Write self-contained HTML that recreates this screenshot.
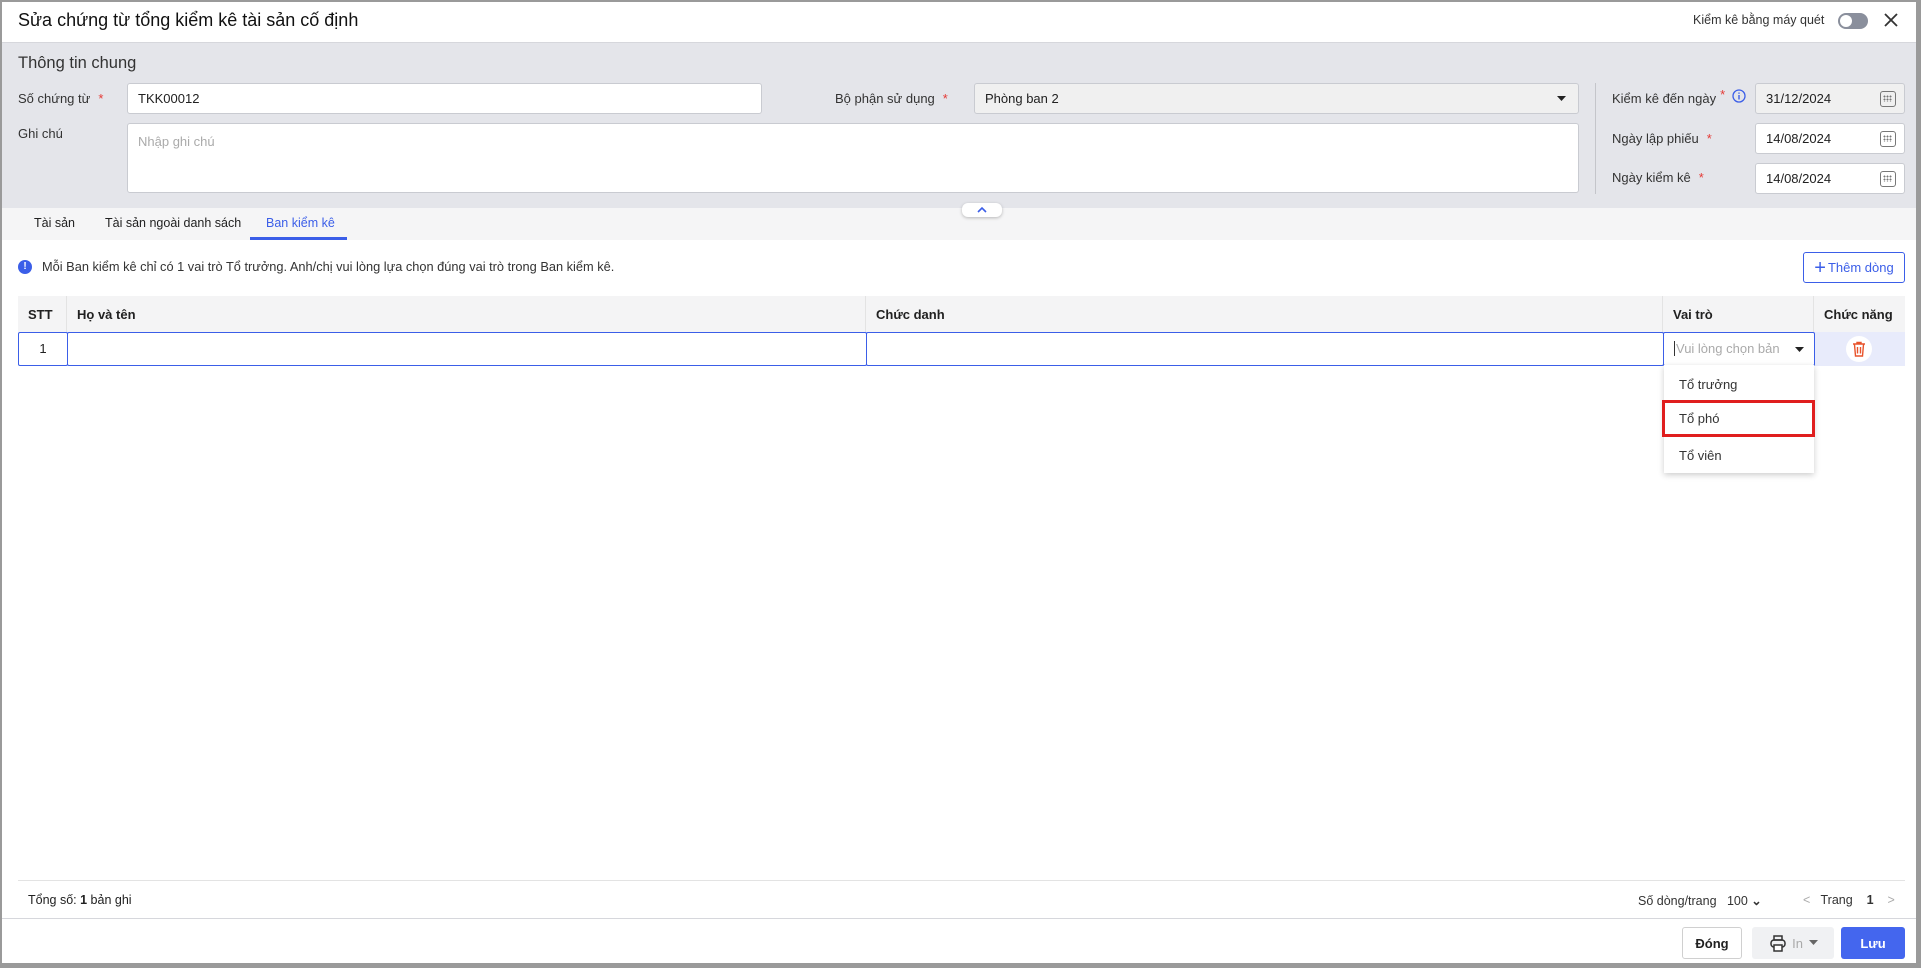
<!DOCTYPE html>
<html><head><meta charset="utf-8"><style>
*{box-sizing:border-box;margin:0;padding:0}
body{width:1921px;height:968px;background:#9a9a9a;font-family:"Liberation Sans",Arial,sans-serif;color:#212121;position:relative;overflow:hidden;font-size:13px}
.a{position:absolute}
#page{left:2px;top:2px;width:1914px;height:961px;background:#fff}
.lbl{font-size:13px;color:#333;white-space:nowrap}
.req{color:#e53935;margin-left:8px}
.inp{background:#fff;border:1px solid #c9cbd1;border-radius:3px;font-size:13px;padding:0 10px;display:flex;align-items:center}
.cal{position:absolute;right:8px;top:7px;width:16px;height:16px;border:1.5px solid #777;border-radius:3px}
.cal:after{content:"";position:absolute;left:2px;top:3px;width:9px;height:7px;background:radial-gradient(circle,#777 0.9px,transparent 1.1px) 0 0/3px 3px}
.th{font-weight:bold;font-size:13px;display:flex;align-items:center;padding-left:10px;border-right:1px solid #e3e3e3}
.cell{border:1px solid #3b5ee8;border-radius:2px;background:#fff}
.it{font-size:13px;color:#333;padding-left:15px;display:flex;align-items:center}
</style></head><body>
<div id="page" class="a"></div>
<div class="a" style="left:18px;top:10px;font-size:18px;color:#111">Sửa chứng từ tổng kiểm kê tài sản cố định</div>
<div class="a" style="left:1693px;top:13px;font-size:12.5px;color:#333">Kiểm kê bằng máy quét</div>
<div class="a" style="left:1838px;top:13px;width:30px;height:16px;border-radius:8px;background:#8a8f9c"><div class="a" style="left:2px;top:2px;width:12px;height:12px;border-radius:6px;background:#fff"></div></div>
<svg class="a" style="left:1883px;top:12px" width="16" height="16"><path d="M2 2L14 14M14 2L2 14" stroke="#333" stroke-width="1.8"/></svg>
<div class="a" style="left:2px;top:42px;width:1914px;height:166px;background:#e4e5ea;border-top:1px solid #d6d7dc"></div>
<div class="a" style="left:18px;top:54px;font-size:16.5px;color:#333">Thông tin chung</div>
<div class="a lbl" style="left:18px;top:91px">Số chứng từ<span class="req">*</span></div>
<div class="a inp" style="left:127px;top:83px;width:635px;height:31px">TKK00012</div>
<div class="a lbl" style="left:835px;top:91px">Bộ phận sử dụng<span class="req">*</span></div>
<div class="a inp" style="left:974px;top:83px;width:605px;height:31px;background:#f0f0f0">Phòng ban 2<svg class="a" style="right:12px;top:12px" width="9" height="6"><path d="M0 0H9L4.5 5Z" fill="#222"/></svg></div>
<div class="a lbl" style="left:18px;top:126px">Ghi chú</div>
<div class="a inp" style="left:127px;top:123px;width:1452px;height:70px;align-items:flex-start;padding-top:10px;color:#aaa">Nhập ghi chú</div>
<div class="a" style="left:1595px;top:83px;width:1px;height:111px;background:#c4c5ca"></div>
<div class="a lbl" style="left:1612px;top:91px">Kiểm kê đến ngày<span class="req" style="margin-left:4px;position:relative;top:-4px">*</span></div>
<svg class="a" style="left:1732px;top:89px" width="14" height="14"><circle cx="7" cy="7" r="6" fill="none" stroke="#3b5ee8" stroke-width="1.3"/><path d="M7 6V10.5M7 3.5V4.8" stroke="#3b5ee8" stroke-width="1.4"/></svg>
<div class="a inp" style="left:1755px;top:83px;width:150px;height:31px;background:#f0f0f0">31/12/2024<span class="cal"></span></div>
<div class="a lbl" style="left:1612px;top:131px">Ngày lập phiếu<span class="req">*</span></div>
<div class="a inp" style="left:1755px;top:123px;width:150px;height:31px">14/08/2024<span class="cal"></span></div>
<div class="a lbl" style="left:1612px;top:170px">Ngày kiểm kê<span class="req">*</span></div>
<div class="a inp" style="left:1755px;top:163px;width:150px;height:31px">14/08/2024<span class="cal"></span></div>
<div class="a" style="left:2px;top:208px;width:1914px;height:32px;background:#f5f5f6"></div>
<div class="a" style="left:962px;top:203px;width:40px;height:14px;background:#fff;border-radius:6px;box-shadow:0 1px 3px rgba(0,0,0,.25)"><svg class="a" style="left:15px;top:3px" width="10" height="7"><path d="M1 6L5 2L9 6" fill="none" stroke="#3b5ee8" stroke-width="1.6"/></svg></div>
<div class="a" style="left:34px;top:216px;font-size:12.5px">Tài sản</div>
<div class="a" style="left:105px;top:216px;font-size:12.5px">Tài sản ngoài danh sách</div>
<div class="a" style="left:266px;top:216px;font-size:12.5px;color:#3b5ee8">Ban kiểm kê</div>
<div class="a" style="left:250px;top:237px;width:97px;height:3px;background:#3b5ee8"></div>
<div class="a" style="left:18px;top:260px;width:14px;height:14px;border-radius:7px;background:#3b5ee8;color:#fff;font-size:10px;font-weight:bold;text-align:center;line-height:14px">!</div>
<div class="a" style="left:42px;top:259px;font-size:12.8px;color:#333">Mỗi Ban kiểm kê chỉ có 1 vai trò Tổ trưởng. Anh/chị vui lòng lựa chọn đúng vai trò trong Ban kiểm kê.</div>
<div class="a" style="left:1803px;top:252px;width:102px;height:31px;border:1px solid #3b5ee8;border-radius:3px;color:#3b5ee8;font-size:13px;display:flex;align-items:center;justify-content:center"><span style="font-size:20px;margin-right:2px;line-height:1">+</span>Thêm dòng</div>
<div class="a" style="left:18px;top:296px;width:1887px;height:36px;background:#f4f4f5;display:flex">
<div class="th" style="width:49px">STT</div><div class="th" style="width:799px">Họ và tên</div><div class="th" style="width:797px">Chức danh</div><div class="th" style="width:151px">Vai trò</div><div class="th" style="width:91px;border:0">Chức năng</div></div>
<div class="a" style="left:1814px;top:332px;width:91px;height:34px;background:#e8ebfb"></div>
<div class="a cell" style="left:18px;top:332px;width:50px;height:34px;text-align:center;line-height:32px;font-size:13px">1</div>
<div class="a cell" style="left:67px;top:332px;width:800px;height:34px"></div>
<div class="a cell" style="left:866px;top:332px;width:798px;height:34px"></div>
<div class="a cell" style="left:1663px;top:332px;width:152px;height:34px;font-size:13px;color:#aaa;padding-left:10px;line-height:32px;overflow:hidden;white-space:nowrap"><span style="border-left:1px solid #333;padding-left:1px">Vui lòng chọn bản</span><svg class="a" style="right:10px;top:14px" width="9" height="6"><path d="M0 0H9L4.5 5Z" fill="#222"/></svg></div>
<div class="a" style="left:1846px;top:336px;width:26px;height:26px;border-radius:13px;background:#fff"><svg class="a" style="left:6px;top:5px" width="14" height="16"><path d="M1 3H13M5 3V1.5H9V3M2.5 3.5L3.5 15H10.5L11.5 3.5M5.5 6V12.5M8.5 6V12.5" fill="none" stroke="#e8532b" stroke-width="1.4"/></svg></div>
<div class="a" style="left:1664px;top:365px;width:150px;height:108px;background:#fff;box-shadow:0 2px 6px rgba(0,0,0,.2)"></div>
<div class="a it" style="left:1664px;top:366px;width:150px;height:36px">Tổ trưởng</div>
<div class="a it" style="left:1662px;top:400px;width:153px;height:37px;border:3px solid #e01e1e;padding-left:14px">Tổ phó</div>
<div class="a it" style="left:1664px;top:437px;width:150px;height:36px">Tổ viên</div>
<div class="a" style="left:18px;top:880px;width:1887px;height:1px;background:#e3e3e3"></div>
<div class="a" style="left:28px;top:893px;font-size:12.5px">Tổng số: <b>1</b> bản ghi</div>
<div class="a" style="left:1638px;top:893px;font-size:12.5px;color:#333">Số dòng/trang&nbsp;&nbsp;&nbsp;100 <b>⌄</b></div>
<div class="a" style="left:1803px;top:893px;font-size:12.5px;color:#333"><span style="color:#aaa">&lt;</span>&nbsp;&nbsp; Trang &nbsp;&nbsp;&nbsp;<b>1</b>&nbsp;&nbsp;&nbsp; <span style="color:#aaa">&gt;</span></div>
<div class="a" style="left:2px;top:918px;width:1914px;height:1px;background:#d6d7dc"></div>
<div class="a" style="left:1682px;top:927px;width:60px;height:32px;border:1px solid #d0d0d0;border-radius:3px;font-size:13px;font-weight:bold;display:flex;align-items:center;justify-content:center">Đóng</div>
<div class="a" style="left:1752px;top:927px;width:82px;height:32px;background:#f0f1f3;border-radius:3px;font-size:13px;color:#aaa;display:flex;align-items:center;justify-content:center"><svg width="20" height="20" style="margin-right:4px"><rect x="3" y="7" width="14" height="7" rx="3" fill="none" stroke="#333" stroke-width="1.5"/><rect x="6" y="3" width="8" height="4" fill="none" stroke="#333" stroke-width="1.5"/><rect x="6" y="12" width="8" height="6" fill="#fff" stroke="#333" stroke-width="1.5"/></svg>In <svg width="9" height="6" style="margin-left:6px"><path d="M0 0H9L4.5 5Z" fill="#666"/></svg></div>
<div class="a" style="left:1841px;top:927px;width:64px;height:32px;background:#4466ee;border-radius:3px;color:#fff;font-size:13px;font-weight:bold;display:flex;align-items:center;justify-content:center">Lưu</div>
</body></html>
